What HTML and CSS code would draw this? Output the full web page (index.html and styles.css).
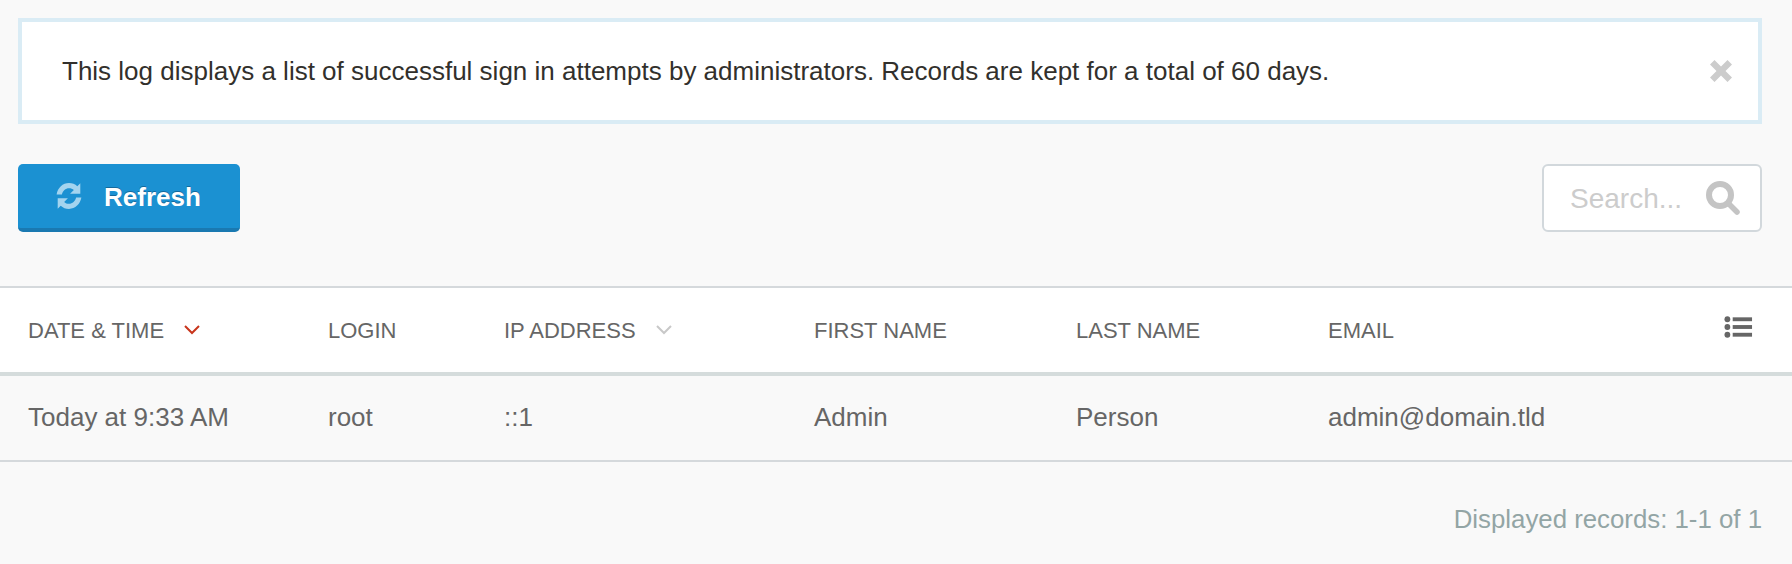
FILE: index.html
```html
<!DOCTYPE html>
<html lang="en">
<head>
  <meta charset="UTF-8">
  <title>Access log</title>
  <link rel="stylesheet" href="styles.css">
</head>
<body>
  <div class="alert">
    <p>This log displays a list of successful sign in attempts by administrators. Records are kept for a total of 60 days.</p>
    <svg class="alert-close" viewBox="0 0 22 22" width="22" height="22">
      <path d="M0 4.500 4.500 0 11 6.500 17.500 0 22 4.500 15.500 11 22 17.500 17.500 22 11 15.500 4.500 22 0 17.500 6.500 11z" fill="#ccc"/>
    </svg>
  </div>

  <div class="toolbar">
    <button class="refresh" type="button">
      <svg class="refresh-icon" viewBox="0 0 26 26" width="28" height="28">
        <path d="M1.500 11.500C2.500 5.500 7.200 1 13 1c3 0 5.700 1.100 7.700 3L23.500 1.200V11H14l3.500-3.500C16.300 6.300 14.800 5.700 13 5.700c-3.200 0-5.900 2.400-6.600 5.800z" fill="#a3d4ef"/>
        <path d="M24.500 14.500C23.500 20.500 18.800 25 13 25c-3 0-5.700-1.100-7.700-3L2.500 24.800V15H12l-3.500 3.500c1.200 1.200 2.700 1.800 4.500 1.800 3.200 0 5.900-2.400 6.600-5.800z" fill="#a3d4ef"/>
      </svg>
      <span class="refresh-label">Refresh</span>
    </button>
    <div class="search">
      <span class="search-label">Search...</span>
      <svg viewBox="0 0 36 36" width="36" height="36">
        <circle cx="15" cy="15" r="11" fill="none" stroke="#c4c4c4" stroke-width="6"/>
        <path d="M24 24l8 8" stroke="#c4c4c4" stroke-width="5.500" stroke-linecap="round"/>
      </svg>
    </div>
  </div>

  <table class="log-table">
    <thead>
      <tr>
        <th class="col-date">DATE &amp; TIME
          <svg class="sort" viewBox="0 0 16 10" width="16" height="10"><path d="M1 1l7 7 7-7" fill="none" stroke="#c8351c" stroke-width="2"/></svg>
        </th>
        <th class="col-login">LOGIN</th>
        <th class="col-ip">IP ADDRESS
          <svg class="sort" viewBox="0 0 16 10" width="16" height="10"><path d="M1 1l7 7 7-7" fill="none" stroke="#c8c8c8" stroke-width="2"/></svg>
        </th>
        <th class="col-first">FIRST NAME</th>
        <th class="col-last">LAST NAME</th>
        <th class="col-email">EMAIL</th>
        <th class="col-menu">
          <svg viewBox="0 0 30 22" width="29" height="22">
            <circle cx="3.500" cy="3" r="3" fill="#666"/><rect x="9" y="1" width="20" height="4" fill="#666"/>
            <circle cx="3.500" cy="11" r="3" fill="#666"/><rect x="9" y="9" width="20" height="4" fill="#666"/>
            <circle cx="3.500" cy="19" r="3" fill="#666"/><rect x="9" y="17" width="20" height="4" fill="#666"/>
          </svg>
        </th>
      </tr>
    </thead>
    <tbody>
      <tr>
        <td>Today at 9:33 AM</td>
        <td>root</td>
        <td>::1</td>
        <td>Admin</td>
        <td>Person</td>
        <td>admin@domain.tld</td>
        <td></td>
      </tr>
    </tbody>
  </table>

  <div class="records">Displayed records: 1-1 of 1</div>
</body>
</html>
```

FILE: styles.css
```css
html, body {
  margin: 0;
  padding: 0;
}

body {
  background: #f9f9f9;
  font-family: "Liberation Sans", Arial, sans-serif;
  color: #666;
  height: 564px;
  overflow: hidden;
}

.alert {
  display: flex;
  align-items: center;
  justify-content: space-between;
  box-sizing: border-box;
  height: 106px;
  margin: 18px 30px 0 18px;
  padding: 0 26px 0 40px;
  background: #fff;
  border: 4px solid #daecf5;
  color: #32302c;
  font-size: 26px;
}

.alert p {
  margin: 0;
}

.toolbar {
  display: flex;
  justify-content: space-between;
  margin: 40px 30px 54px 18px;
}

.refresh {
  display: flex;
  align-items: center;
  gap: 21px;
  box-sizing: border-box;
  width: 222px;
  height: 68px;
  padding: 0 0 0 37px;
  background: #1b91d2;
  border: none;
  border-bottom: 4px solid #1a79b1;
  border-radius: 5px;
  color: #fff;
  font-family: inherit;
  font-size: 26px;
  font-weight: bold;
  text-shadow: 0 -1px 0 #15699c;
}

.refresh-label,
.search-label {
  padding-top: 2px;
}

.search {
  display: flex;
  align-items: center;
  justify-content: space-between;
  box-sizing: border-box;
  width: 220px;
  height: 68px;
  padding: 0 19px 0 26px;
  background: #fff;
  border: 2px solid #d2d8dc;
  border-radius: 6px;
  color: #ccc;
  font-size: 28px;
}

.log-table {
  width: 100%;
  border-collapse: collapse;
  table-layout: fixed;
}

.log-table thead tr {
  background: #fff;
  border-top: 2px solid #d5d9dc;
  border-bottom: 4px solid #d5dcdc;
}

.log-table th {
  box-sizing: border-box;
  height: 87px;
  padding: 2px 0 0 28px;
  font-size: 22px;
  font-weight: normal;
  text-align: left;
  white-space: nowrap;
}

.log-table td {
  height: 82px;
  padding: 0 0 2px 28px;
  font-size: 26px;
}

.log-table tbody tr {
  border-bottom: 2px solid #d5d9dc;
}

.col-date { width: 300px; }
.col-login { width: 176px; }
.col-ip { width: 310px; }
.col-first { width: 262px; }
.col-last { width: 252px; }
.col-email { width: 324px; }
.col-menu { width: 168px; }

.log-table th.col-menu {
  padding: 0 39px 0 0;
  text-align: right;
}

.sort {
  margin-left: 14px;
  vertical-align: 3px;
}

.records {
  margin: 43px 30px 0 0;
  color: #93a5a5;
  font-size: 25.800px;
  text-align: right;
}
```
